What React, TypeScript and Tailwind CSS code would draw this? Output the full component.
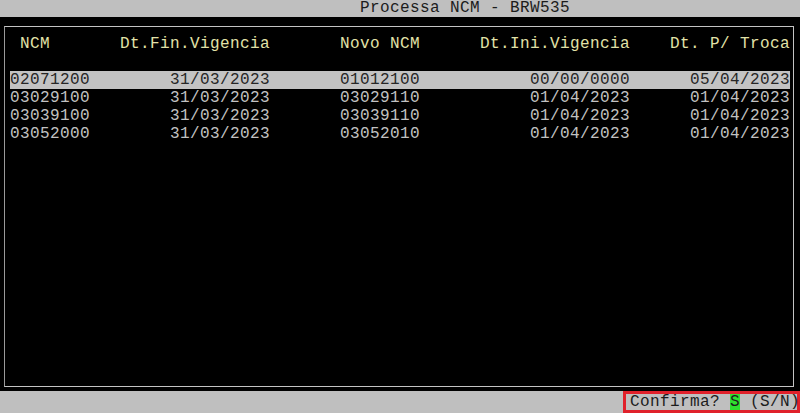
import React from "react";

type Row = {
  ncm: string;
  fimVig: string;
  novo: string;
  iniVig: string;
  troca: string;
};

const rows: Row[] = [
  { ncm: "02071200", fimVig: "31/03/2023", novo: "01012100", iniVig: "00/00/0000", troca: "05/04/2023" },
  { ncm: "03029100", fimVig: "31/03/2023", novo: "03029110", iniVig: "01/04/2023", troca: "01/04/2023" },
  { ncm: "03039100", fimVig: "31/03/2023", novo: "03039110", iniVig: "01/04/2023", troca: "01/04/2023" },
  { ncm: "03052000", fimVig: "31/03/2023", novo: "03052010", iniVig: "01/04/2023", troca: "01/04/2023" },
];

const cols = "grid grid-cols-[100px_160px_170px_190px_160px] w-[780px]";

const App = () => {
  return (
    <div className="w-[800px] h-[413px] bg-black flex flex-col font-['Courier_New','Liberation_Mono',monospace] text-[16px] tracking-[0.4px] overflow-hidden">
      {/* barra de titulo */}
      <div className="h-[17px] bg-[#bfbfbf] text-[#1c1c1c] leading-[17px] pl-[360px] whitespace-pre">
        Processa NCM - BRW535
      </div>

      <div className="ml-[4px] mt-[9px] w-[790px] h-[361px] border border-[#c4c4c4] border-l-[#9a9a9a] pl-[5px]">
        <div className={`${cols} mt-[8px] h-[18px] leading-[18px] text-[#e2e2a8]`}>
          <span className="pl-[10px]">NCM</span>
          <span className="text-right">Dt.Fin.Vigencia</span>
          <span className="pl-[70px]">Novo NCM</span>
          <span className="text-right">Dt.Ini.Vigencia</span>
          <span className="text-right">Dt. P/ Troca</span>
        </div>

        <div className="mt-[18px] flex flex-col">
          {rows.map((r, i) => (
            <div
              key={r.ncm}
              className={`${cols} h-[18px] leading-[18px] ${
                i === 0 ? "bg-[#c3c3c3] text-[#262626]" : "text-[#c2c2c2]"
              }`}
            >
              <span>{r.ncm}</span>
              <span className="text-right">{r.fimVig}</span>
              <span className="pl-[70px]">{r.novo}</span>
              <span className="text-right">{r.iniVig}</span>
              <span className="text-right">{r.troca}</span>
            </div>
          ))}
        </div>
      </div>

      {/* rodape */}
      <div className="mt-auto h-[22px] bg-[#bfbfbf] flex justify-end">
        <div className="w-[177px] h-[22px] border-[3px] border-[#e0212b] flex items-center pl-[4px] leading-[16px] text-[#1c1c1c] whitespace-pre">
          <span>Confirma? </span>
          <span className="bg-[#2fe02f]">S</span>
          <span> (S/N)</span>
        </div>
      </div>
    </div>
  );
};

export default App;
